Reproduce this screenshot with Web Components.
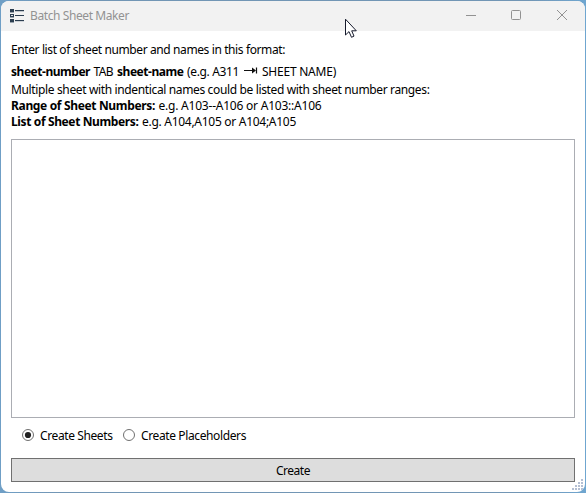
<!DOCTYPE html>
<html lang="en">
<head>
<meta charset="utf-8">
<title>Batch Sheet Maker</title>
<style>
html,body{margin:0;height:100%;overflow:hidden;background:linear-gradient(90deg,#6f9fc6,#7296b5 10%,#7296b5 90%,#6fa6d0);}
body{font:12px/16px "Noto Sans","Open Sans",sans-serif;color:#000}
</style>
</head>
<body>
<app-window>
  <title-bar slot="title"><fit-text w="99">Batch Sheet Maker</fit-text></title-bar>
  <help-text></help-text>
  <text-area></text-area>
  <radio-row>
    <radio-option checked><fit-text w="72.5">Create Sheets</fit-text></radio-option>
    <radio-option><fit-text w="105">Create Placeholders</fit-text></radio-option>
  </radio-row>
  <push-button><fit-text w="34">Create</fit-text></push-button>
</app-window>
<script>
const define = (name, html, extra) => customElements.define(name, class extends HTMLElement {
  connectedCallback() {
    if (this.shadowRoot) return;
    this.attachShadow({mode: 'open'}).innerHTML = html;
    if (extra) extra(this);
  }
});

// A run of text whose tracking is adjusted to fill the width given in "w".
define('fit-text', `<style>:host{display:inline-block;white-space:nowrap;height:16px;line-height:16px;vertical-align:top}
span{display:inline-block;height:16px}</style><span><slot></slot></span>`, el => {
  const span = el.shadowRoot.querySelector('span');
  const target = +el.getAttribute('w');
  const width = span.getBoundingClientRect().width;
  span.style.letterSpacing = (target - width) / (el.textContent.length) + 'px';
  el.style.width = target + 'px';
});

define('app-window', `<style>
:host{display:flex;box-sizing:border-box;width:586px;height:493px;padding:1px}
.frame{position:relative;display:flex;flex-direction:column;width:584px;height:491px;background:#fff;border-radius:8px;overflow:hidden}
.body{display:flex;flex-direction:column;padding:11px 10px 0}
svg{position:absolute;right:1px;bottom:1px}
</style><div class="frame"><slot name="title"></slot><div class="body"><slot></slot></div>
<svg width="12" height="12" shape-rendering="crispEdges"><g fill="#b4bfd3">
<rect x="9" y="0" width="2" height="2"/><rect x="6" y="3" width="2" height="2"/><rect x="9" y="3" width="2" height="2"/>
<rect x="3" y="6" width="2" height="2"/><rect x="6" y="6" width="2" height="2"/><rect x="9" y="6" width="2" height="2"/>
<rect x="0" y="9" width="2" height="2"/><rect x="3" y="9" width="2" height="2"/><rect x="6" y="9" width="2" height="2"/><rect x="9" y="9" width="2" height="2"/></g></svg></div>`);

define('title-bar', `<style>
:host{position:relative;display:flex;height:30px;flex:none;background:#f2f2f2;color:#929292}
.icon{margin:8px 6px 0 9px;flex:none}.t{padding-top:7px;flex:1}
.ctl{flex:none;margin:7px 17px 0 0}
.cur{position:absolute;left:343px;top:17px;z-index:2}
</style>
<svg class="icon" width="14" height="14" shape-rendering="crispEdges"><g fill="#2c3e50"><rect width="4" height="3"/><rect y="5" width="4" height="3"/><rect y="10" width="4" height="3"/><rect x="5" y="1" width="9" height="1"/><rect x="5" y="6" width="9" height="1"/><rect x="5" y="11" width="9" height="1"/></g><g fill="#9ba5ae"><rect y="3" width="4" height="1"/><rect y="8" width="4" height="1"/><rect y="13" width="4" height="1"/><rect x="5" y="2" width="9" height="1" opacity=".55"/><rect x="5" y="12" width="9" height="1" opacity=".4"/><rect x="1" y="6" width="2" height="1" fill="#e1e4e7"/></g></svg>
<div class="t"><slot></slot></div>
<svg class="ctl" width="104" height="14" fill="none" stroke="#929292"><path d="M2 7.5h10"/><rect x="47.5" y="2.5" width="9" height="9" rx="1"/><path d="M93 2l10 10M103 2l-10 10"/></svg>
<svg class="cur" width="13" height="21" viewBox="0 0 13 21"><path d="M1.5 1.2V17L5 13.6 7.5 19.3 10 18.1 7.7 12.8H12.3Z" fill="#fff" stroke="#161a2c" stroke-width="1"/></svg>`);

define('help-text', `<style>
:host{display:block;height:97px}
p{margin:0;height:16px;display:flex}
.gap{margin-top:6px}.gap2{margin-top:2px}
b{font-weight:700;margin-right:3.5px}
.n{margin-right:4px}
svg{margin:2px 4px 0 1px;flex:none}
</style>
<p><fit-text w="274">Enter list of sheet number and names in this format:</fit-text></p>
<p class="gap"><b><fit-text w="79">sheet-number</fit-text></b><fit-text class="n" w="19.5">TAB</fit-text><b><fit-text w="66.5">sheet-name</fit-text></b><fit-text class="n" w="52">(e.g. A311</fit-text><svg width="14" height="9" fill="none" stroke="#111"><path d="M0 4.5h11" stroke-width="1.2"/><path d="M8 1.5L12 4.5 8 7.5Z" fill="#111" stroke="none"/><path d="M12.5 1.5v6" stroke-width="1.2"/></svg><fit-text w="74">SHEET NAME)</fit-text></p>
<p class="gap2"><fit-text w="418.5">Multiple sheet with indentical names could be listed with sheet number ranges:</fit-text></p>
<p><b><fit-text w="144">Range of Sheet Numbers:</fit-text></b><fit-text w="163">e.g. A103--A106 or A103::A106</fit-text></p>
<p><b><fit-text w="127.5">List of Sheet Numbers:</fit-text></b><fit-text w="154">e.g. A104,A105 or A104;A105</fit-text></p>`);

define('text-area', `<style>:host{display:block;box-sizing:border-box;width:564px;height:279px;border:1px solid #abadb3;background:#fff}</style>`);

define('radio-row', `<style>:host{display:flex;gap:10.5px;height:16px;padding:10px 0 14px 11px}</style><slot></slot>`);

define('radio-option', `<style>
:host{display:flex;height:16px;gap:6px}
svg{margin-top:0}circle{fill:#fff;stroke:#707070}.dot{display:none;fill:#212121;stroke:none}
:host([checked]) .dot{display:block}
</style><svg width="12" height="14"><circle cx="6" cy="7" r="5.5"/><circle class="dot" cx="6" cy="7" r="3.1"/></svg><slot></slot>`);

define('push-button', `<style>:host{display:flex;box-sizing:border-box;justify-content:center;width:564px;height:24px;padding-top:4px;border:1px solid #707070;background:#ddd}</style><slot></slot>`);
</script>
</body>
</html>
